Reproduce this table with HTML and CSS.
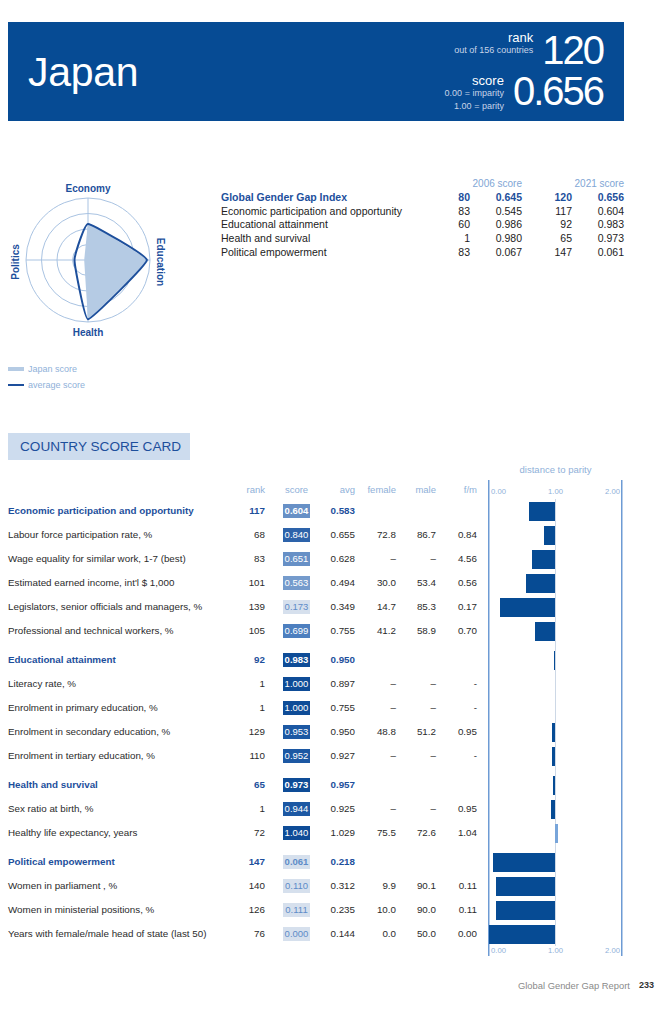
FILE: index.html
```html
<!DOCTYPE html>
<html lang="en">
<head>
<meta charset="utf-8">
<title>Japan – Global Gender Gap Report</title>
<link rel="stylesheet" href="styles.css">
</head>
<body>
<div class="page">
  <header class="hero">
    <h1 class="country">Japan</h1>
    <div class="stats">
      <div class="stat stat-rank">
        <div class="stat-label">
          <div class="stat-name">rank</div>
          <div class="stat-note">out of 156 countries</div>
        </div>
        <div class="stat-value">120</div>
      </div>
      <div class="stat stat-score">
        <div class="stat-label">
          <div class="stat-name">score</div>
          <div class="stat-note">0.00 = imparity</div>
          <div class="stat-note">1.00 = parity</div>
        </div>
        <div class="stat-value">0.656</div>
      </div>
    </div>
  </header>

  <section class="overview">
    <div class="radar-col">
      <svg class="radar" width="213" height="176" viewBox="0 0 213 176">
        <g class="rings">
          <circle cx="88" cy="88" r="15.5"/>
          <circle cx="88" cy="88" r="31"/>
          <circle cx="88" cy="88" r="46.5"/>
          <circle cx="88" cy="88" r="62"/>
          <line x1="88" y1="26" x2="88" y2="150"/>
          <line x1="26" y1="88" x2="150" y2="88"/>
        </g>
        <polygon class="japan-area" points="88,50.6 148.9,88 88,148.3 84.2,88"/>
        <path class="avg-line" d="M88,51.9 C91.6,51.9 146.9,83.3 146.9,88 C146.9,92.7 91.6,147.3 88,147.3 C84.4,147.3 74.5,92.7 74.5,88 C74.5,83.3 84.4,51.9 88,51.9 Z"/>
        <text class="axis-label" x="88" y="20" text-anchor="middle">Economy</text>
        <text class="axis-label" x="88" y="164" text-anchor="middle">Health</text>
        <text class="axis-label" x="0" y="0" text-anchor="middle" transform="translate(19 90) rotate(-90)">Politics</text>
        <text class="axis-label" x="0" y="0" text-anchor="middle" transform="translate(156.5 90) rotate(90)">Education</text>
      </svg>
      <div class="legend">
        <div class="legend-item"><span class="swatch swatch-japan"></span>Japan score</div>
        <div class="legend-item"><span class="swatch swatch-avg"></span>average score</div>
      </div>
    </div>

    <div class="summary">
      <div class="sum-row sum-head">
        <span></span>
        <span class="span2">2006 score</span>
        <span class="span2">2021 score</span>
      </div>
      <div class="sum-row sum-main">
        <span>Global Gender Gap Index</span><span class="num">80</span><span class="num">0.645</span><span class="num">120</span><span class="num">0.656</span>
      </div>
      <div class="sum-row">
        <span>Economic participation and opportunity</span><span class="num">83</span><span class="num">0.545</span><span class="num">117</span><span class="num">0.604</span>
      </div>
      <div class="sum-row">
        <span>Educational attainment</span><span class="num">60</span><span class="num">0.986</span><span class="num">92</span><span class="num">0.983</span>
      </div>
      <div class="sum-row">
        <span>Health and survival</span><span class="num">1</span><span class="num">0.980</span><span class="num">65</span><span class="num">0.973</span>
      </div>
      <div class="sum-row">
        <span>Political empowerment</span><span class="num">83</span><span class="num">0.067</span><span class="num">147</span><span class="num">0.061</span>
      </div>
    </div>
  </section>

  <div class="card-title">COUNTRY SCORE CARD</div>

  <div class="card">
    <div class="row row-dist">
      <span></span><span></span><span></span><span></span><span></span><span></span><span></span><span></span>
      <span class="dist-label">distance to parity</span>
    </div>
    <div class="row row-head">
      <span></span>
      <span class="c-num">rank</span>
      <span class="c-score">score</span>
      <span class="c-num">avg</span>
      <span class="c-num">female</span>
      <span class="c-num">male</span>
      <span class="c-num">f/m</span>
      <span></span>
      <span class="chart axis"><span>0.00</span><span>1.00</span><span>2.00</span></span>
    </div>

    <div class="row sec first">
      <span class="c-label">Economic participation and opportunity</span>
      <span class="c-num">117</span><span class="c-score"><span class="box s-mid2">0.604</span></span><span class="c-num">0.583</span>
      <span class="c-num"></span><span class="c-num"></span><span class="c-num"></span><span></span>
      <span class="chart"><span class="bar" style="margin-left:40.9px;width:26.1px"></span></span>
    </div>
    <div class="row">
      <span class="c-label">Labour force participation rate, %</span>
      <span class="c-num">68</span><span class="c-score"><span class="box s-dark2">0.840</span></span><span class="c-num">0.655</span>
      <span class="c-num">72.8</span><span class="c-num">86.7</span><span class="c-num">0.84</span><span></span>
      <span class="chart"><span class="bar" style="margin-left:56.4px;width:10.6px"></span></span>
    </div>
    <div class="row">
      <span class="c-label">Wage equality for similar work, 1-7 (best)</span>
      <span class="c-num">83</span><span class="c-score"><span class="box s-mid2">0.651</span></span><span class="c-num">0.628</span>
      <span class="c-num">–</span><span class="c-num">–</span><span class="c-num">4.56</span><span></span>
      <span class="chart"><span class="bar" style="margin-left:44px;width:23px"></span></span>
    </div>
    <div class="row">
      <span class="c-label">Estimated earned income, int'l $ 1,000</span>
      <span class="c-num">101</span><span class="c-score"><span class="box s-mid1">0.563</span></span><span class="c-num">0.494</span>
      <span class="c-num">30.0</span><span class="c-num">53.4</span><span class="c-num">0.56</span><span></span>
      <span class="chart"><span class="bar" style="margin-left:38.2px;width:28.8px"></span></span>
    </div>
    <div class="row">
      <span class="c-label">Legislators, senior officials and managers, %</span>
      <span class="c-num">139</span><span class="c-score"><span class="box s-light">0.173</span></span><span class="c-num">0.349</span>
      <span class="c-num">14.7</span><span class="c-num">85.3</span><span class="c-num">0.17</span><span></span>
      <span class="chart"><span class="bar" style="margin-left:12.4px;width:54.6px"></span></span>
    </div>
    <div class="row">
      <span class="c-label">Professional and technical workers, %</span>
      <span class="c-num">105</span><span class="c-score"><span class="box s-mid3">0.699</span></span><span class="c-num">0.755</span>
      <span class="c-num">41.2</span><span class="c-num">58.9</span><span class="c-num">0.70</span><span></span>
      <span class="chart"><span class="bar" style="margin-left:47.1px;width:19.9px"></span></span>
    </div>

    <div class="row sec">
      <span class="c-label">Educational attainment</span>
      <span class="c-num">92</span><span class="c-score"><span class="box s-dark4">0.983</span></span><span class="c-num">0.950</span>
      <span class="c-num"></span><span class="c-num"></span><span class="c-num"></span><span></span>
      <span class="chart"><span class="bar" style="margin-left:65.9px;width:1.1px"></span></span>
    </div>
    <div class="row">
      <span class="c-label">Literacy rate, %</span>
      <span class="c-num">1</span><span class="c-score"><span class="box s-dark4">1.000</span></span><span class="c-num">0.897</span>
      <span class="c-num">–</span><span class="c-num">–</span><span class="c-num">-</span><span></span>
      <span class="chart"></span>
    </div>
    <div class="row">
      <span class="c-label">Enrolment in primary education, %</span>
      <span class="c-num">1</span><span class="c-score"><span class="box s-dark4">1.000</span></span><span class="c-num">0.755</span>
      <span class="c-num">–</span><span class="c-num">–</span><span class="c-num">-</span><span></span>
      <span class="chart"></span>
    </div>
    <div class="row">
      <span class="c-label">Enrolment in secondary education, %</span>
      <span class="c-num">129</span><span class="c-score"><span class="box s-dark3">0.953</span></span><span class="c-num">0.950</span>
      <span class="c-num">48.8</span><span class="c-num">51.2</span><span class="c-num">0.95</span><span></span>
      <span class="chart"><span class="bar" style="margin-left:63.9px;width:3.1px"></span></span>
    </div>
    <div class="row">
      <span class="c-label">Enrolment in tertiary education, %</span>
      <span class="c-num">110</span><span class="c-score"><span class="box s-dark3">0.952</span></span><span class="c-num">0.927</span>
      <span class="c-num">–</span><span class="c-num">–</span><span class="c-num">-</span><span></span>
      <span class="chart"><span class="bar" style="margin-left:63.8px;width:3.2px"></span></span>
    </div>

    <div class="row sec">
      <span class="c-label">Health and survival</span>
      <span class="c-num">65</span><span class="c-score"><span class="box s-dark4">0.973</span></span><span class="c-num">0.957</span>
      <span class="c-num"></span><span class="c-num"></span><span class="c-num"></span><span></span>
      <span class="chart"><span class="bar" style="margin-left:65.2px;width:1.8px"></span></span>
    </div>
    <div class="row">
      <span class="c-label">Sex ratio at birth, %</span>
      <span class="c-num">1</span><span class="c-score"><span class="box s-dark3">0.944</span></span><span class="c-num">0.925</span>
      <span class="c-num">–</span><span class="c-num">–</span><span class="c-num">0.95</span><span></span>
      <span class="chart"><span class="bar" style="margin-left:63.3px;width:3.7px"></span></span>
    </div>
    <div class="row">
      <span class="c-label">Healthy life expectancy, years</span>
      <span class="c-num">72</span><span class="c-score"><span class="box s-dark4">1.040</span></span><span class="c-num">1.029</span>
      <span class="c-num">75.5</span><span class="c-num">72.6</span><span class="c-num">1.04</span><span></span>
      <span class="chart"><span class="bar bar-over" style="margin-left:67px;width:2.6px"></span></span>
    </div>

    <div class="row sec">
      <span class="c-label">Political empowerment</span>
      <span class="c-num">147</span><span class="c-score"><span class="box s-light">0.061</span></span><span class="c-num">0.218</span>
      <span class="c-num"></span><span class="c-num"></span><span class="c-num"></span><span></span>
      <span class="chart"><span class="bar" style="margin-left:5px;width:62px"></span></span>
    </div>
    <div class="row">
      <span class="c-label">Women in parliament , %</span>
      <span class="c-num">140</span><span class="c-score"><span class="box s-light">0.110</span></span><span class="c-num">0.312</span>
      <span class="c-num">9.9</span><span class="c-num">90.1</span><span class="c-num">0.11</span><span></span>
      <span class="chart"><span class="bar" style="margin-left:8.3px;width:58.7px"></span></span>
    </div>
    <div class="row">
      <span class="c-label">Women in ministerial positions, %</span>
      <span class="c-num">126</span><span class="c-score"><span class="box s-light">0.111</span></span><span class="c-num">0.235</span>
      <span class="c-num">10.0</span><span class="c-num">90.0</span><span class="c-num">0.11</span><span></span>
      <span class="chart"><span class="bar" style="margin-left:8.3px;width:58.7px"></span></span>
    </div>
    <div class="row">
      <span class="c-label">Years with female/male head of state (last 50)</span>
      <span class="c-num">76</span><span class="c-score"><span class="box s-light">0.000</span></span><span class="c-num">0.144</span>
      <span class="c-num">0.0</span><span class="c-num">50.0</span><span class="c-num">0.00</span><span></span>
      <span class="chart"><span class="bar" style="margin-left:1px;width:66px"></span></span>
    </div>

    <div class="row row-foot">
      <span></span><span></span><span></span><span></span><span></span><span></span><span></span><span></span>
      <span class="chart axis"><span>0.00</span><span>1.00</span><span>2.00</span></span>
    </div>
  </div>

  <footer class="footer">
    <span class="foot-title">Global Gender Gap Report</span>
    <span class="foot-page">233</span>
  </footer>
</div>
</body>
</html>
```

FILE: styles.css
```css
* { box-sizing: border-box; }

html, body {
  margin: 0;
  padding: 0;
  background: #fff;
}

body {
  font-family: "Liberation Sans", Arial, Helvetica, sans-serif;
  color: #2b2b2b;
}

.page {
  width: 670px;
  height: 1024px;
  overflow: hidden;
}

/* ---------- hero ---------- */
.hero {
  margin: 22px 46px 0 8px;
  height: 99px;
  background: #064b94;
  color: #fff;
  display: flex;
  justify-content: space-between;
  align-items: flex-start;
  padding: 8px 19px 0 20px;
}

.country {
  margin: 0;
  margin-top: 22px;
  font-size: 41px;
  line-height: 41px;
  font-weight: normal;
  letter-spacing: -0.3px;
}

.stats {
  display: flex;
  flex-direction: column;
  align-items: flex-end;
}

.stat {
  display: flex;
  align-items: flex-start;
}

.stat-rank { height: 41px; }

.stat-label {
  text-align: right;
}

.stat-rank .stat-label { margin-top: 1px; margin-right: 9px; }
.stat-score .stat-label { margin-top: 2.5px; margin-right: 9px; }

.stat-name {
  font-size: 13px;
  line-height: 14px;
}

.stat-rank .stat-note { line-height: 10px; }

.stat-note {
  font-size: 9px;
  line-height: 13px;
  color: #c6d4e8;
}

.stat-score .stat-name { line-height: 13px; }

.stat-value {
  font-size: 40px;
  line-height: 40px;
  letter-spacing: -2px;
  margin-right: 2px;
}

/* ---------- overview ---------- */
.overview {
  display: flex;
  margin-top: 51px;
}

.radar-col {
  width: 213px;
  flex: none;
}

.radar {
  display: block;
}

.rings circle,
.rings line {
  fill: none;
  stroke: #a9c3e2;
  stroke-width: 1;
}

.japan-area {
  fill: #b5cbe4;
  stroke: none;
}

.avg-line {
  fill: none;
  stroke: #1d4f9c;
  stroke-width: 2;
  stroke-linejoin: round;
}

.axis-label {
  font-family: "Liberation Sans", Arial, sans-serif;
  font-size: 10px;
  font-weight: bold;
  fill: #1d4f9c;
}

.legend {
  padding: 13px 0 0 8px;
}

.legend-item {
  display: flex;
  align-items: center;
  height: 16px;
  font-size: 9px;
  color: #8fb1d9;
}

.swatch {
  display: inline-block;
  width: 16px;
  margin-right: 4px;
}

.swatch-japan {
  height: 4px;
  background: #b5cbe4;
}

.swatch-avg {
  height: 2px;
  background: #1d4f9c;
}

.summary {
  margin-left: 8px;
  padding-top: 5px;
  width: 403px;
}

.sum-row {
  display: grid;
  grid-template-columns: 219px 30px 52px 50px 52px;
  font-size: 10.5px;
  line-height: 13.8px;
  color: #222;
}

.sum-row .num { text-align: right; }

.sum-head {
  grid-template-columns: 219px 82px 102px;
  color: #7fa6d5;
  font-size: 10px;
}

.sum-head .span2 { text-align: right; }

.sum-main {
  color: #1d4f9c;
  font-weight: bold;
}

/* ---------- score card ---------- */
.card-title {
  margin: 40px 0 0 8px;
  width: 182px;
  height: 27px;
  background: #cddcee;
  color: #1d4f9c;
  font-size: 13.6px;
  line-height: 27px;
  padding-left: 12px;
  white-space: nowrap;
}

.card {
  padding-left: 8px;
}

.row {
  display: grid;
  grid-template-columns: 232px 25px 63px 27px 41px 40px 41px 11px 135px;
  height: 24px;
  align-items: end;
  font-size: 9.8px;
  color: #2b2b2b;
}

.row > span {
  line-height: 24px;
  white-space: nowrap;
}

.row.sec { height: 29px; }
.row.sec.first { height: 24px; }

.row.sec .c-label,
.row.sec .c-num {
  color: #1d4f9c;
  font-weight: bold;
}

.c-num { text-align: right; }
.c-score { text-align: center; }

.box {
  display: inline-block;
  width: 27px;
  height: 14px;
  line-height: 14px;
  font-size: 9.5px;
  text-align: center;
  color: #fff;
  vertical-align: middle;
}

.row.sec .box { font-weight: bold; }

.s-light { background: #d6e0ed; color: #5e8cc8; }
.s-mid1 { background: #759bcc; }
.s-mid2 { background: #6790c6; }
.s-mid3 { background: #4d7fbf; }
.s-dark2 { background: #2d63aa; }
.s-dark3 { background: #1c58a3; }
.s-dark4 { background: #0e4c97; }

.row-dist { height: 20px; }
.row-dist > span { line-height: 20px; }

.dist-label {
  text-align: center;
  font-size: 9.5px;
  color: #8fb1d9;
}

.row-head { height: 19px; }
.row-head > span {
  line-height: 19px;
  font-size: 9.5px;
  color: #8fb1d9;
}

.chart {
  align-self: stretch;
  display: flex;
  align-items: flex-end;
  background:
    linear-gradient(#6d9bd4, #6d9bd4) 0 0 / 1.5px 100% no-repeat,
    linear-gradient(#6d9bd4, #6d9bd4) 133px 0 / 1.5px 100% no-repeat,
    linear-gradient(#cdd8e6, #cdd8e6) 67px 0 / 1px 100% no-repeat;
}

.row > .chart { line-height: normal; }

.bar {
  display: block;
  height: 19px;
  margin-bottom: 2.5px;
  background: #064b94;
}

.bar-over { background: #78a5da; }

.chart.axis {
  justify-content: space-between;
  align-items: center;
  padding: 0 3px 0 3px;
  background:
    linear-gradient(#6d9bd4, #6d9bd4) 0 0 / 1.5px 100% no-repeat,
    linear-gradient(#6d9bd4, #6d9bd4) 133px 0 / 1.5px 100% no-repeat;
}

.row-head > .axis > span,
.row-foot > .axis > span {
  font-size: 7.7px;
  line-height: 10px;
  color: #8fb1d9;
}

.row-head > .axis { align-items: flex-end; padding-bottom: 2px; }

.row-foot { height: 10px; }
.row-foot > span { line-height: 10px; }
.row-foot .axis { align-items: flex-start; }

/* ---------- footer ---------- */
.footer {
  margin-top: 23px;
  display: flex;
  justify-content: flex-end;
  align-items: center;
  height: 12px;
  padding-right: 16px;
  font-size: 9.4px;
}

.foot-title { color: #8a8a8a; }

.foot-page {
  margin-left: 9px;
  color: #333;
  font-weight: bold;
  font-size: 9px;
}
```
